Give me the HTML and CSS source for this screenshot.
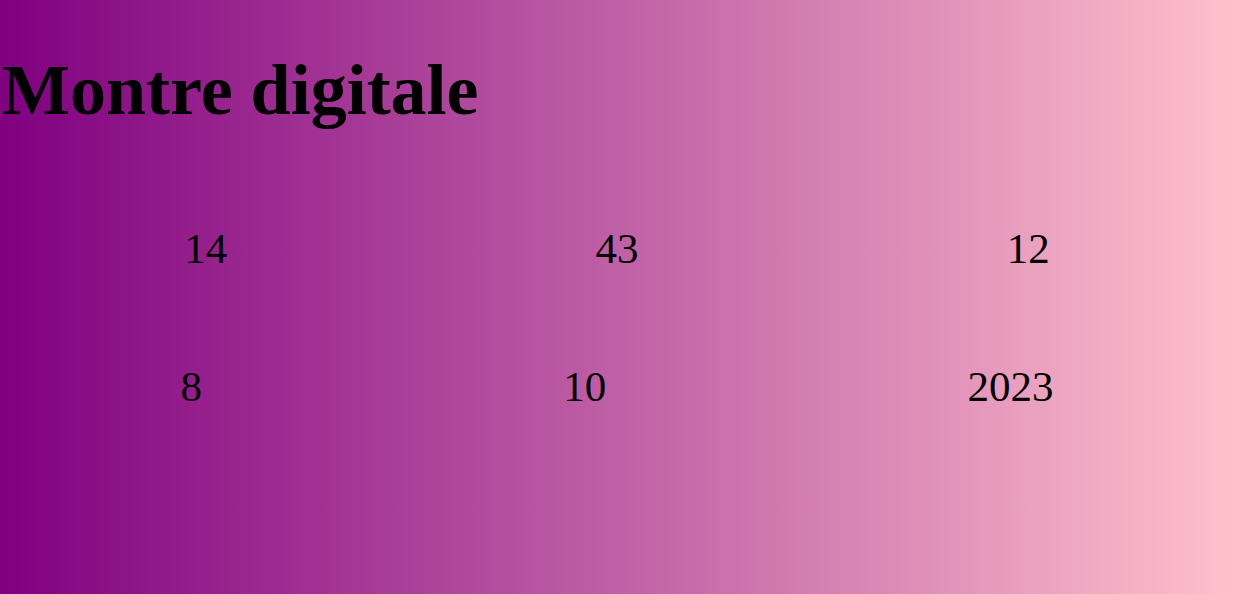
FILE: index.html
```html
<!DOCTYPE html>
<html lang="fr">
<head>
<meta charset="utf-8">
<title>Montre digitale</title>
<link rel="stylesheet" href="styles.css">
</head>
<body>
<h1 class="title">Montre digitale</h1>
<main class="watch">
<div class="row">
<p class="value">14</p>
<p class="value">43</p>
<p class="value">12</p>
</div>
<div class="row">
<p class="value">8</p>
<p class="value">10</p>
<p class="value">2023</p>
</div>
</main>
</body>
</html>
```

FILE: styles.css
```css
* {
  margin: 0;
  padding: 0;
  box-sizing: border-box;
}

body {
  min-height: 100vh;
  padding-top: 48px;
  background: linear-gradient(to right, purple, pink);
  color: #000;
  font-family: "Liberation Serif", "Times New Roman", serif;
}

.title {
  padding-left: 2px;
  font-size: 72px;
  line-height: 84px;
}

.watch {
  display: flex;
  flex-direction: column;
  gap: 88px;
  padding-top: 92px;
}

.row {
  display: flex;
  justify-content: space-around;
}

.value {
  font-size: 43px;
  line-height: 50px;
}
```
